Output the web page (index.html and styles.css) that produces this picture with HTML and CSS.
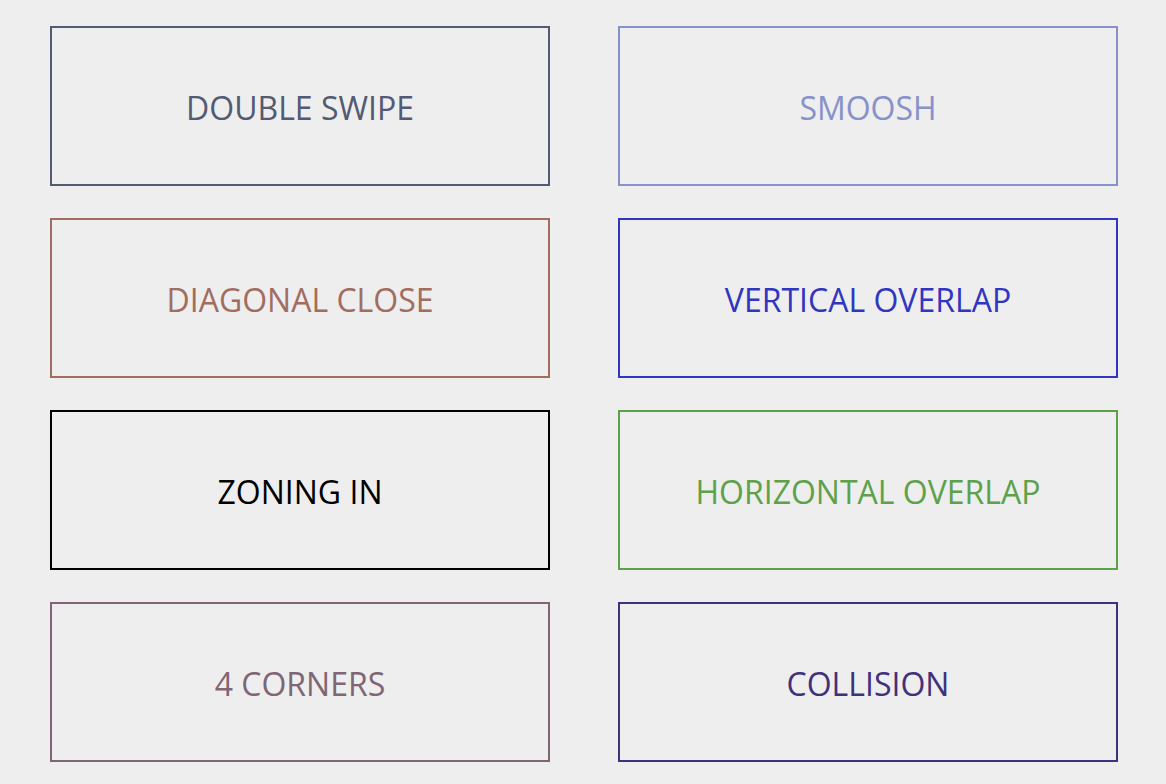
FILE: index.html
```html
<!DOCTYPE html>
<html lang="en">
<head>
  <meta charset="UTF-8" />
  <meta name="viewport" content="width=device-width, initial-scale=1.0" />
  <title>Button Effects</title>
  <link rel="stylesheet" href="styles.css">
</head>
<body>
  <div class="buttons">
    <button class="btn double-swipe">Double Swipe</button>
    <button class="btn smoosh">Smoosh</button>
    <button class="btn diagonal-close">Diagonal Close</button>
    <button class="btn vertical-overlap">Vertical Overlap</button>
    <button class="btn zoning-in">Zoning In</button>
    <button class="btn horizontal-overlap">Horizontal Overlap</button>
    <button class="btn corners">4 Corners</button>
    <button class="btn collision">Collision</button>
  </div>
</body>
</html>
```

FILE: styles.css
```css
body {
  margin: 0;
  background: #eeeeee;
  font-family: "Open Sans", Arial, sans-serif;
}
.buttons {
  display: grid;
  grid-template-columns: 500px 500px;
  grid-auto-rows: 160px;
  column-gap: 68px;
  row-gap: 32px;
  padding: 26px 0 0 50px;
}
.btn {
  background: transparent;
  border: 2px solid currentColor;
  font-family: inherit;
  font-size: 32px;
  text-transform: uppercase;
  cursor: pointer;
  padding: 2px 0 0;
}
.double-swipe { color: #535a73; }
.smoosh { color: #8891c9; }
.diagonal-close { color: #a16d5f; }
.vertical-overlap { color: #3136c0; }
.zoning-in { color: #000000; }
.horizontal-overlap { color: #5ea14b; }
.corners { color: #7f6575; }
.collision { color: #41317a; }
```
